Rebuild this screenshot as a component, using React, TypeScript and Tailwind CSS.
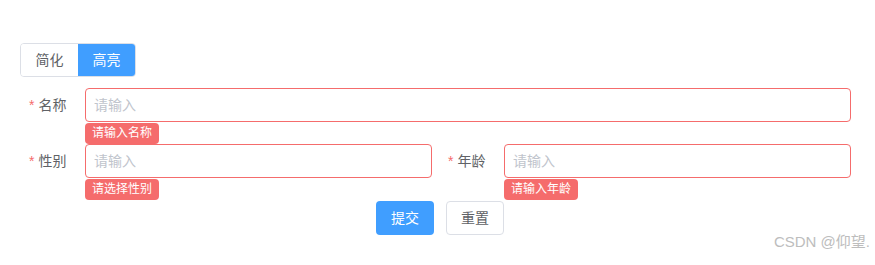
import React from "react";

const font = { fontFamily: '"Liberation Sans", "Noto Sans CJK SC", sans-serif' };

function Label({ text }: { text: string }) {
  return (
    <div className="w-[65px] shrink-0 flex items-center h-[34px] pl-[9px] text-[14px] text-[#606266]">
      <span className="text-[#f56c6c] mr-[4px]">*</span>
      <span>{text}</span>
    </div>
  );
}

function Field({ label, error }: { label: string; error: string }) {
  return (
    <div className="flex flex-1 min-w-0">
      <Label text={label} />
      <div className="relative flex-1 min-w-0">
        <input
          placeholder="请输入"
          className="w-full h-[34px] border border-[#f56c6c] rounded-[4px] pl-[8px] text-[14px] text-[#606266] placeholder:text-[#c0c4cc] outline-none"
          style={font}
        />
        <div className="absolute left-0 top-[35px] h-[21px] px-[7px] rounded-[4px] bg-[#f56c6c] text-white text-[12px] leading-[21px] whitespace-nowrap">
          {error}
        </div>
      </div>
    </div>
  );
}

export default function App() {
  return (
    <div className="relative w-[875px] h-[265px] bg-white px-[20px] pr-[24px] pt-[43px]" style={font}>
      <div className="flex">
        <div className="flex border border-[#dcdfe6] rounded-[4px] overflow-hidden h-[34px]">
          <button className="w-[57px] h-full text-[14px] text-[#606266] bg-white">简化</button>
          <button className="w-[57px] h-full text-[14px] text-white bg-[#409eff]">高亮</button>
        </div>
      </div>
      <div className="mt-[11px] flex">
        <Field label="名称" error="请输入名称" />
      </div>
      <div className="mt-[22px] flex gap-[7px]">
        <Field label="性别" error="请选择性别" />
        <Field label="年龄" error="请输入年龄" />
      </div>
      <div className="mt-[23px] flex justify-center gap-[12px] pl-[9px]">
        <button className="w-[58px] h-[34px] rounded-[4px] bg-[#409eff] text-white text-[14px]">提交</button>
        <button className="w-[58px] h-[34px] rounded-[4px] border border-[#dcdfe6] bg-white text-[#606266] text-[14px]">重置</button>
      </div>
      <div className="absolute right-[5px] bottom-[12px] text-[15px] text-[#bdbdbd]">CSDN @仰望.</div>
    </div>
  );
}
